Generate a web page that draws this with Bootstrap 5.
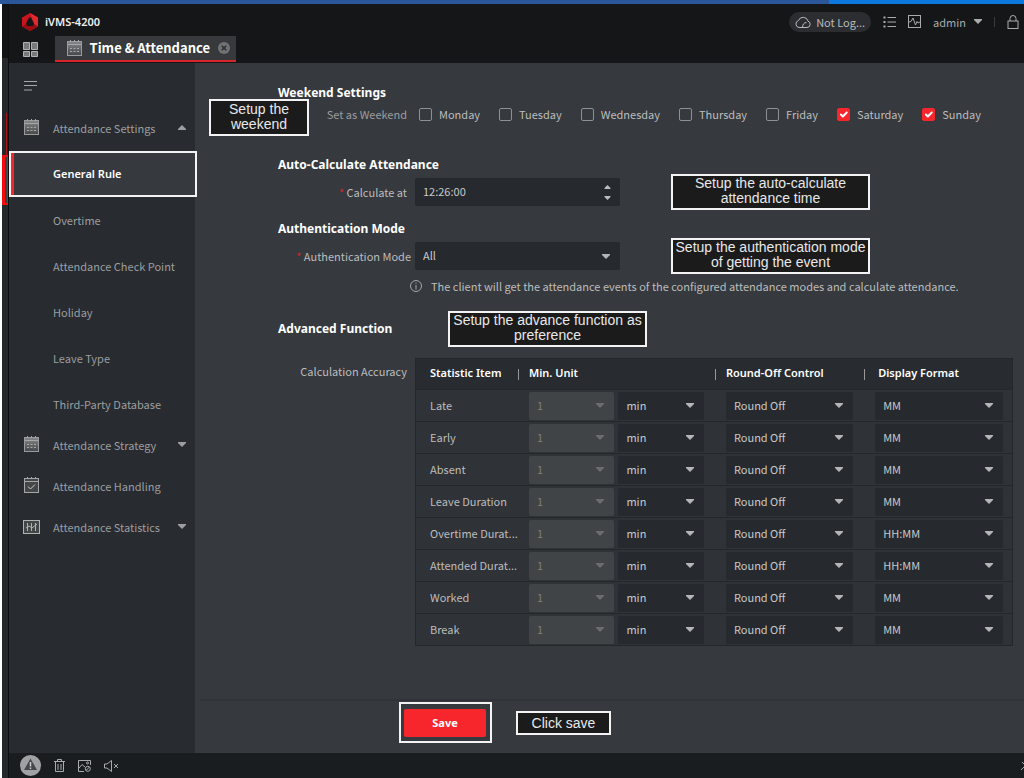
<!DOCTYPE html>
<html lang="en">
<head>
<meta charset="utf-8">
<meta name="viewport" content="width=device-width, initial-scale=1">
<title>iVMS-4200</title>
<link href="https://cdn.jsdelivr.net/npm/bootstrap@5.3.0/dist/css/bootstrap.min.css" rel="stylesheet">
<style>
:root { --panel:#36393d; --side:#282b2f; --dark:#141618; --red:#f7262c; --txt:#bcbdbe; --dim:#9c9ea0; --ui:"Noto Sans CJK SC","Noto Sans",sans-serif; --strong:"Noto Sans","Open Sans",sans-serif; }
body { font-family:var(--ui); font-size:11px; line-height:18px; color:var(--txt); background:var(--panel); overflow-x:hidden; }
svg { display:block; flex-shrink:0; }
button, a { color:inherit; text-decoration:none; }
.plain { background:none; border:0; padding:0; }
.strip { height:4px; background:#2b579a; }
.strip span { width:19%; background:#0a78dc; }
.rail { width:9px; border-left:2px solid #fff; border-right:1px solid #0c0e10; background:linear-gradient(#111315 54px,#23282c 54px); }
.rail-line { left:4px; top:109px; width:1px; height:44px; background:#a31216; }
.rail-mark { left:0; top:151px; width:6px; height:50px; border:2px solid #f00d10; border-left-width:3px; border-right-width:1px; background:#3b4540; }
.topbar { background:var(--dark); }
.title-row { height:32px; padding:3px 0 0 12px; }
.brand { font-family:var(--strong); font-weight:600; color:#eee; gap:6px; }
.tools { gap:12px; color:#a9abad; }
.pill { height:20px; padding:0 6px; gap:5px; border-radius:10px; background:#2b2d31; color:#b9bbbd; }
.tabs-row { height:27px; padding-left:14px; gap:17px; }
.app-tab { height:26px; width:181px; padding:0 6px 0 11px; background:#38393c; border-bottom:2px solid #d8242b; color:#fff; font-size:13px; font-weight:700; }
.sidebar { width:186px; background:var(--side); color:var(--dim); }
.burger { height:44px; padding:18px 0 0 15px; }
.side-group { height:41px; padding:0 9px 0 14px; gap:13px; }
.side-list { margin:3px 0 -3px; }
.side-sub { height:46px; padding-left:44px; }
.side-sub.active { position:relative; margin-right:-2px; padding-left:42px; background:var(--panel); border:2px solid #f3f3f3; box-shadow:inset 3px 0 var(--red); color:#fff; font-family:var(--strong); font-weight:600; }
.content { padding:21px 11px 0 83px; }
.sec-title { font-family:var(--strong); font-size:12px; line-height:18px; font-weight:700; color:#fff; margin:0; }
.field { min-height:36px; }
.field-label { width:137px; text-align:right; white-space:nowrap; flex-shrink:0; }
.req { color:#d8242b; }
.note { border:2px solid #f3f3f3; background:#1b1b1b; color:#e8e8e8; font-family:"Liberation Sans",sans-serif; font-size:14px; line-height:15px; text-align:center; }
.note-wide { width:199px; height:36px; margin-left:51px; }
.note-week { left:-69px; top:15px; width:100px; height:37px; padding-top:1px; }
.days { gap:19px; }
.day { gap:7px; }
.day .form-check-input { width:13px; height:13px; margin:0; border:1px solid #8e9092; border-radius:2px; background-color:transparent; }
.day .form-check-input:checked { background-color:var(--red); border-color:var(--red); background-size:13px 13px; }
.box { height:28px; padding:0 8px 2px; border:0; border-radius:2px; background-color:#26292d; color:#c9cacb; font-size:11px; line-height:18px; }
select.box { background-image:url("data:image/svg+xml,%3Csvg xmlns='http://www.w3.org/2000/svg' viewBox='0 0 8 5'%3E%3Cpath d='M0 0h8v1L4 5 0 1z' fill='%23b4b5b6'/%3E%3C/svg%3E"); background-size:8px 5px; background-position:right 10px center; }
select.box:disabled { background-color:#414447; color:#7d7f81; background-image:url("data:image/svg+xml,%3Csvg xmlns='http://www.w3.org/2000/svg' viewBox='0 0 8 5'%3E%3Cpath d='M0 0h8v1L4 5 0 1z' fill='%236a6c6e'/%3E%3C/svg%3E"); opacity:1; }
.main-field { width:205px; }
.steps { right:9px; top:7px; gap:7px; }
.acc { table-layout:fixed; border:1px solid #25282b; background:#2f3236; border-collapse:collapse; }
.acc th { height:31px; background:#282b2f; color:#fff; font-family:var(--strong); font-weight:600; padding:0 0 2px; position:relative; }
.acc th + th::before { content:""; position:absolute; left:-11px; top:10px; width:1px; height:11px; background:#96989a; }
.acc th:last-child { padding-left:3px; }
.acc td { height:32px; padding:0; border-top:1px solid #25282b; }
.acc td:first-child { padding-bottom:2px; }
.acc tr > :first-child { padding-left:14px; }
.c-item { width:19%; } .c-unit { width:33%; } .c-round { width:25%; }
.pair { gap:4px; padding-right:22px; }
.pad-round { padding-right:22px !important; }
.pad-disp { padding-right:9px !important; }
.actions { margin-left:5px; height:54px; padding-left:199px; padding-bottom:9px; gap:24px; border-top:2px solid #303337; }
.save-frame { border:2px solid #f3f3f3; padding:5px 4px 4px 3px; }
.save-btn { width:82px; height:28px; padding:0; border:0; border-radius:2px; background:var(--red); color:#fff; font-family:var(--strong); font-size:11px; font-weight:700; }
.note-click { width:95px; height:24px; line-height:20px; }
.status { height:25px; background:#1a1d20; padding-left:11px; gap:13px; color:#a9abad; }
</style>
</head>
<body class="d-flex flex-column min-vh-100">
<svg width="0" height="0" class="position-absolute" aria-hidden="true">
  <defs>
    <linearGradient id="fade" x1="0" y1="0" x2="0" y2="1"><stop offset="0" stop-color="#85878a"/><stop offset="1" stop-color="#45484b"/></linearGradient>
    <symbol id="cal" viewBox="0 0 17 17">
      <rect x="1.500" y="1.500" width="14" height="14" fill="url(#fade)" stroke="#999b9d"/><path d="M2 4.500h13M4.500 0v2M8.500 0v2M12.500 0v2" stroke="#a5a7a9" fill="none"/>
      <path d="M4 8.500h2m1.500 0h2m1.500 0h2M4 11.500h2m1.500 0h2m1.500 0h2" stroke="#a5a7a9"/>
    </symbol>
    <symbol id="up" viewBox="0 0 8 5"><path d="M0 5h8V4L4 0 0 4z" fill="currentColor"/></symbol>
    <symbol id="down" viewBox="0 0 8 5"><path d="M0 0h8v1L4 5 0 1z" fill="currentColor"/></symbol>
  </defs>
</svg>
<div class="strip d-flex justify-content-end"><span></span></div>
<div class="d-flex flex-grow-1">
  <div class="rail position-relative flex-shrink-0"><i class="rail-line position-absolute"></i><i class="rail-mark position-absolute"></i></div>
  <div class="d-flex flex-column flex-grow-1">
    <header class="topbar">
      <div class="title-row d-flex align-items-center justify-content-between">
        <div class="brand d-flex align-items-center">
          <svg width="18" height="18" viewBox="0 0 18 18"><path d="M9 0l8 4.500v9L9 18l-8-4.500v-9z" fill="#c9141b"/><path d="M9 0l8 4.500v9L13 11 11 5z" fill="#e02a30"/><path d="M1 13.500L5 11l8 0 4 2.500L9 18z" fill="#9b0d12"/><path d="M8 4.500h2l3 6-1 2.500H6l-1-2.500z" fill="#141618"/></svg>
          <span>iVMS-4200</span>
        </div>
        <div class="tools d-flex align-items-center">
          <button type="button" class="plain pill d-flex align-items-center">
            <svg width="16" height="12" viewBox="0 0 16 12" fill="none" stroke="currentColor"><path d="M4 11.500h8a3.300 3.300 0 0 0 1-6.400 5 5 0 0 0-9.500-.6A3.600 3.600 0 0 0 4 11.500zM7.500 11.500c0-3 1.500-5 4-5"/></svg>
            <span>Not Log...</span></button>
          <button type="button" class="plain" aria-label="List"><svg width="13" height="12" viewBox="0 0 13 12" stroke="currentColor" fill="none"><path d="M4.500 1.500H13M4.500 6H13M4.500 10.500H13"/><path d="M.5 1.500h2M.5 6h2M.5 10.500h2" stroke-width="2"/></svg></button>
          <button type="button" class="plain" aria-label="Monitor"><svg width="13" height="13" viewBox="0 0 13 13" stroke="currentColor" fill="none"><rect x=".5" y=".5" width="12" height="12"/><path d="M1 7l2-.5L5 3l2.500 7L9 6.500l1 1.500 2-1"/></svg></button>
          <button type="button" class="plain d-flex align-items-center gap-2"><span>admin</span><svg width="8" height="5"><use href="#down"/></svg></button>
          <span class="vr align-self-center" style="height:10px;min-height:0"></span>
          <button type="button" class="plain" aria-label="Lock"><svg width="17" height="14" viewBox="0 0 17 14" stroke="currentColor" fill="none"><rect x="1" y="6" width="10" height="7.500"/><path d="M3 6V3.500a3 3 0 0 1 6 0V6"/></svg></button>
        </div>
      </div>
      <div class="tabs-row d-flex">
        <button type="button" class="plain" aria-label="Modules"><svg width="15" height="15" viewBox="0 0 15 15" fill="#77797b" stroke="#b0b2b4"><path d="M.5.5h6v7h-6zM8.500.5h6v7h-6zM.5 9.500h6v5h-6zM8.500 9.500h6v5h-6z"/></svg></button>
        <div class="app-tab d-flex align-items-center">
          <svg width="17" height="17"><use href="#cal"/></svg><span class="ms-auto me-2">Time &amp; Attendance</span>
          <button type="button" class="plain" aria-label="Close tab"><svg width="12" height="12" viewBox="0 0 12 12"><circle cx="6" cy="6" r="6" fill="#707274"/><path d="M3.700 3.700l4.600 4.600M8.300 3.700L3.700 8.300" stroke="#2c2d30" stroke-width="1.500"/></svg></button>
        </div>
      </div>
    </header>
    <div class="d-flex flex-grow-1">
      <nav class="sidebar flex-shrink-0">
        <div class="burger"><button type="button" class="plain d-block" aria-label="Menu"><svg width="13" height="10" viewBox="0 0 13 10" stroke="#a5a7a9"><path d="M0 .5h13M0 4.500h13M0 9h8"/></svg></button></div>
        <a href="#" class="side-group d-flex align-items-center"><svg width="17" height="17"><use href="#cal"/></svg><span>Attendance Settings</span><svg class="ms-auto" width="8" height="5"><use href="#up"/></svg></a>
        <div class="side-list">
          <a href="#" class="side-sub active d-flex align-items-center">General Rule</a>
          <a href="#" class="side-sub d-flex align-items-center">Overtime</a>
          <a href="#" class="side-sub d-flex align-items-center">Attendance Check Point</a>
          <a href="#" class="side-sub d-flex align-items-center">Holiday</a>
          <a href="#" class="side-sub d-flex align-items-center">Leave Type</a>
          <a href="#" class="side-sub d-flex align-items-center">Third-Party Database</a>
        </div>
        <a href="#" class="side-group d-flex align-items-center"><svg width="17" height="17"><use href="#cal"/></svg><span>Attendance Strategy</span><svg class="ms-auto" width="8" height="5"><use href="#down"/></svg></a>
        <a href="#" class="side-group d-flex align-items-center"><svg width="17" height="17" viewBox="0 0 17 17" fill="none" stroke="#a5a7a9"><rect x="1.500" y="1.500" width="14" height="14" fill="#44474a"/><path d="M2 4.500h13M4.500 0v2M8.500 0v2M12.500 0v2"/><path d="M5 9.500L7.500 12 12 7.500" stroke="#ccc"/></svg><span>Attendance Handling</span></a>
        <a href="#" class="side-group d-flex align-items-center"><svg width="17" height="14" viewBox="0 0 17 14" fill="none" stroke="#b0b2b4"><rect x=".5" y=".5" width="16" height="13" fill="#44474a"/><path d="M4.500 3v8M8.500 3v8M12.500 3v8M3 8l3-2 3 2 5-4"/></svg><span>Attendance Statistics</span><svg class="ms-auto" width="8" height="5"><use href="#down"/></svg></a>
      </nav>
      <main class="d-flex flex-column flex-grow-1">
        <form class="d-flex flex-column flex-grow-1">
          <div class="content flex-grow-1">
            <section class="position-relative" style="margin-bottom:33px">
              <h2 class="sec-title">Weekend Settings</h2>
              <div class="d-flex" style="margin-top:3px"><span class="field-label pe-2" style="color:var(--dim)">Set as Weekend</span>
                <div class="days d-flex ps-1" id="days"></div></div>
              <div class="note note-week position-absolute">Setup the weekend</div>
            </section>
            <section style="margin-bottom:10px">
              <h2 class="sec-title">Auto-Calculate Attendance</h2>
              <div class="field d-flex align-items-center"><label class="field-label pe-2" for="at"><span class="req">*</span> Calculate at</label>
                <div class="main-field position-relative"><input id="at" class="box w-100" type="text" value="12:26:00">
                  <div class="steps position-absolute d-flex flex-column"><svg width="7" height="4" viewBox="0 0 8 5"><use href="#up"/></svg><svg width="7" height="4" viewBox="0 0 8 5"><use href="#down"/></svg></div></div>
                <div class="note note-wide">Setup the auto-calculate attendance time</div></div>
            </section>
            <section>
              <h2 class="sec-title">Authentication Mode</h2>
              <div class="field d-flex align-items-center"><label class="field-label pe-1" for="mode"><span class="req">*</span> Authentication Mode</label>
                <select id="mode" class="form-select box main-field"><option>All</option></select>
                <div class="note note-wide">Setup the authentication mode of getting the event</div></div>
              <p class="d-flex align-items-center mb-0" style="margin:3px 0 0 132px;gap:9px"><svg width="12" height="12" viewBox="0 0 12 12" fill="none" stroke="#a5a7a9"><circle cx="6" cy="6" r="5.500"/><path d="M6 2.500v1.300M6 5v4.500"/></svg><span>The client will get the attendance events of the configured attendance modes and calculate attendance.</span></p>
            </section>
            <section style="margin-top:16px">
              <div class="d-flex align-items-center"><h2 class="sec-title" style="width:119px">Advanced Function</h2><div class="note note-wide">Setup the advance function as preference</div></div>
              <div class="d-flex" style="margin-top:11px"><span class="field-label pe-2 mt-1">Calculation Accuracy</span>
                <table class="acc w-100"><colgroup><col class="c-item"><col class="c-unit"><col class="c-round"><col></colgroup>
                  <thead><tr><th>Statistic Item</th><th>Min. Unit</th><th>Round-Off Control</th><th>Display Format</th></tr></thead>
                  <tbody id="rows"></tbody></table></div>
            </section>
          </div>
          <div class="actions d-flex align-items-center">
            <div class="save-frame"><button type="button" class="save-btn d-block">Save</button></div>
            <div class="note note-click">Click save</div>
          </div>
        </form>
      </main>
    </div>
    <footer class="status d-flex align-items-center">
      <svg width="21" height="21" viewBox="0 0 21 21"><circle cx="10.500" cy="10.500" r="10.500" fill="#a0a1a3"/><path d="M10.500 3.500l6.500 11.500H4z" fill="#45484b"/><path d="M10.500 7v4.500M10.500 12.500v1.500" stroke="#ccc" stroke-width="1.500"/></svg>
      <button type="button" class="plain" aria-label="Delete"><svg width="11" height="13" viewBox="0 0 11 13" fill="none" stroke="currentColor"><path d="M0 2.500h11M3.500 2V.5h4V2M1.500 3v9.500h8V3M4 5v6M7 5v6"/></svg></button>
      <button type="button" class="plain" aria-label="Pictures"><svg width="13" height="12" viewBox="0 0 13 12" fill="none" stroke="currentColor"><path d="M12.500 5V.5H.5v11H6M1 8l3-3.500L7 7"/><circle cx="9.500" cy="3" r="1"/><circle cx="9.800" cy="8.800" r="2.500"/><path d="M8 10.500L11.500 7"/></svg></button>
      <button type="button" class="plain" aria-label="Mute"><svg width="15" height="12" viewBox="0 0 15 12" fill="none" stroke="currentColor"><path d="M.5 4v4H3l4.500 3.500V.5L3 4zM10 4l4 4M14 4l-4 4"/></svg></button>
      <button type="button" class="plain ms-auto" aria-label="Expand"><svg width="3" height="8" viewBox="0 0 3 8" fill="none" stroke="currentColor"><path d="M1 0l2 2M0 8l3-3"/></svg></button>
    </footer>
  </div>
</div>
<script>
const days = ["Monday","Tuesday","Wednesday","Thursday","Friday","Saturday","Sunday"];
document.getElementById("days").innerHTML = days.map((d, i) =>
  `<div class="day d-flex align-items-center"><input class="form-check-input" type="checkbox" id="d${i}" ${i > 4 ? "checked" : ""}><label for="d${i}">${d}</label></div>`).join("");
const items = [["Late","MM"],["Early","MM"],["Absent","MM"],["Leave Duration","MM"],["Overtime Durat...","HH:MM"],["Attended Durat...","HH:MM"],["Worked","MM"],["Break","MM"]];
const pick = (text, name, off) => `<select class="form-select box" aria-label="${name}" ${off ? "disabled" : ""}><option>${text}</option></select>`;
document.getElementById("rows").innerHTML = items.map(([n, f]) =>
  `<tr><td class="text-nowrap">${n}</td><td><div class="pair d-flex">${pick("1", n + " unit", true)}${pick("min", n + " unit type")}</div></td><td class="pad-round">${pick("Round Off", n + " rounding")}</td><td class="pad-disp">${pick(f, n + " format")}</td></tr>`).join("");
</script>
<script src="https://cdn.jsdelivr.net/npm/bootstrap@5.3.0/dist/js/bootstrap.bundle.min.js"></script>
</body>
</html>
